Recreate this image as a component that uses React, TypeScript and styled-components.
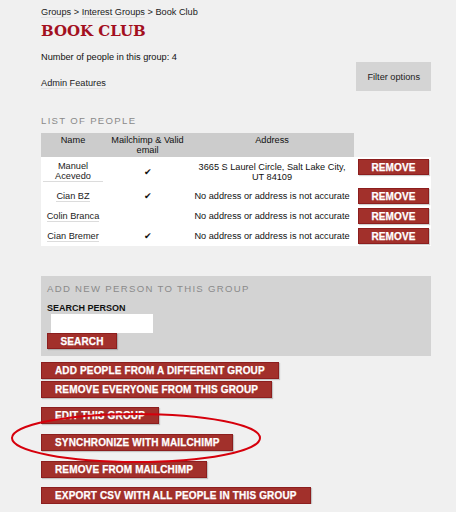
import styled, { createGlobalStyle } from 'styled-components';

const GlobalStyle = createGlobalStyle`
    body {
        margin: 0;
        background: #f0f0f0;
        font-family: "Liberation Sans", Arial, sans-serif;
        color: #111;
    }
`

const Page = styled.div`
    width: 390px;
    padding: 6px 25px 0 41px;
    font-size: 9.2px;
    line-height: 12px;
`

const Breadcrumb = styled.div`
    color: #222;
`

const Crumb = styled.a`
    color: #222;
    text-decoration: none;
    border-bottom: 1px solid #e2e2e2;
`

const Title = styled.h1`
    margin: 4px 0 0;
    font-family: "DejaVu Serif", "Liberation Serif", serif;
    font-weight: 900;
    font-size: 15px;
    line-height: 18px;
    color: #a3101f;
`

const TopRow = styled.div`
    display: flex;
    justify-content: space-between;
    margin-top: 11px;
`

const Meta = styled.div`
    margin-bottom: 14px;
`

const AdminLink = styled.a`
    color: #222;
    text-decoration: none;
    border-bottom: 1px solid #e2e2e2;
`

const FilterButton = styled.button`
    margin-top: 11px;
    height: 29px;
    padding: 0 11px;
    border: none;
    background: #d4d4d4;
    font-family: inherit;
    font-size: 9.2px;
    color: #222;
`

const SectionLabel = styled.div<{ $inset?: boolean }>`
    margin-top: ${p => (p.$inset ? 0 : 24)}px;
    color: #8a8a8a;
    font-size: 9.6px;
    letter-spacing: 1.3px;
    text-transform: uppercase;
`

const PeopleTable = styled.table`
    margin-top: 6px;
    width: 390px;
    border-collapse: collapse;
    table-layout: fixed;
    font-size: 9.2px;
    line-height: 10px;

    tbody {
        background: #fff;
    }
`

const HeadCell = styled.th<{ $blank?: boolean; $w: number }>`
    width: ${p => p.$w}px;
    height: 24px;
    padding: 2px 4px 0;
    box-sizing: border-box;
    vertical-align: top;
    font-weight: normal;
    background: ${p => (p.$blank ? 'transparent' : '#cccccc')};
`

const Cell = styled.td<{ $button?: boolean }>`
    padding: ${p => (p.$button ? '2px' : '4px 2px')};
    text-align: center;
    vertical-align: ${p => (p.$button ? 'top' : 'middle')};
`

const NameLink = styled.a`
    display: inline-block;
    color: #222;
    line-height: 10px;
    text-decoration: none;
    border-bottom: 1px solid #dcdcdc;
`

const RedButton = styled.button<{ $gap?: number }>`
    display: block;
    margin: ${p => p.$gap ?? 0}px 0 0;
    height: 17px;
    padding: 0 13px;
    border: 1px solid #8c1e1e;
    background: #a2302b;
    box-shadow: 1px 1px 1px rgba(0, 0, 0, 0.18);
    color: #fff;
    font-family: "Liberation Sans", Arial, sans-serif;
    font-weight: bold;
    font-size: 10px;
    letter-spacing: 0.15px;
    -webkit-text-stroke: 0.25px #fff;
    white-space: nowrap;
`

const RemoveButton = styled(RedButton)`
    width: 71px;
    height: 16px;
    margin: 0 0 0 2px;
    padding: 0;
`

const AddPanel = styled.div`
    margin-top: 30px;
    height: 80px;
    box-sizing: border-box;
    padding: 7px 6px 0;
    background: #d3d3d3;
`

const FieldLabel = styled.div`
    margin-top: 7px;
    font-weight: bold;
    font-size: 9px;
    color: #111;
`

const SearchInput = styled.input`
    display: block;
    margin-left: 4px;
    width: 102px;
    height: 19px;
    box-sizing: border-box;
    border: none;
    background: #fff;
`

const SearchButton = styled(RedButton)`
    width: 70px;
    height: 16px;
    padding: 0;
`

const Actions = styled.div`
    position: relative;
    display: flex;
    flex-direction: column;
    align-items: flex-start;
    margin-top: 6px;
`

const Highlight = styled.svg`
    position: absolute;
    left: -32px;
    top: 50px;
    pointer-events: none;
`

const people = [
    { name: 'Manuel Acevedo', mailchimp: true, address: '3665 S Laurel Circle, Salt Lake City, UT 84109' },
    { name: 'Cian BZ', mailchimp: true, address: 'No address or address is not accurate' },
    { name: 'Colin Branca', mailchimp: false, address: 'No address or address is not accurate' },
    { name: 'Cian Bremer', mailchimp: true, address: 'No address or address is not accurate' },
]

const actions = [
    { label: 'ADD PEOPLE FROM A DIFFERENT GROUP', gap: 0 },
    { label: 'REMOVE EVERYONE FROM THIS GROUP', gap: 2 },
    { label: 'EDIT THIS GROUP', gap: 9 },
    { label: 'SYNCHRONIZE WITH MAILCHIMP', gap: 10 },
    { label: 'REMOVE FROM MAILCHIMP', gap: 10 },
    { label: 'EXPORT CSV WITH ALL PEOPLE IN THIS GROUP', gap: 9 },
]

const App = () => {
    return (
        <>
            <GlobalStyle />
            <Page>
                <Breadcrumb>
                    <Crumb>Groups</Crumb> &gt; <Crumb>Interest Groups</Crumb> &gt; Book Club
                </Breadcrumb>
                <Title>BOOK CLUB</Title>
                <TopRow>
                    <div>
                        <Meta>Number of people in this group: 4</Meta>
                        <AdminLink>Admin Features</AdminLink>
                    </div>
                    <FilterButton>Filter options</FilterButton>
                </TopRow>

                <SectionLabel>List of people</SectionLabel>
                <PeopleTable>
                    <thead>
                        <tr>
                            <HeadCell $w={64}>Name</HeadCell>
                            <HeadCell $w={85}>Mailchimp &amp; Valid email</HeadCell>
                            <HeadCell $w={164}>Address</HeadCell>
                            <HeadCell $w={77} $blank />
                        </tr>
                    </thead>
                    <tbody>
                        {people.map(person => (
                            <tr key={person.name}>
                                <Cell><NameLink>{person.name}</NameLink></Cell>
                                <Cell>{person.mailchimp ? '✔' : ''}</Cell>
                                <Cell>{person.address}</Cell>
                                <Cell $button><RemoveButton>REMOVE</RemoveButton></Cell>
                            </tr>
                        ))}
                    </tbody>
                </PeopleTable>

                <AddPanel>
                    <SectionLabel $inset>Add new person to this group</SectionLabel>
                    <FieldLabel>SEARCH PERSON</FieldLabel>
                    <SearchInput type="text" />
                    <SearchButton>SEARCH</SearchButton>
                </AddPanel>

                <Actions>
                    {actions.map(action => (
                        <RedButton key={action.label} $gap={action.gap}>{action.label}</RedButton>
                    ))}
                    <Highlight width="254" height="52" viewBox="0 0 254 52">
                        <ellipse cx="127" cy="26" rx="124" ry="24" fill="none" stroke="#d6000c" strokeWidth="2" />
                    </Highlight>
                </Actions>
            </Page>
        </>
    )
}

export default App
